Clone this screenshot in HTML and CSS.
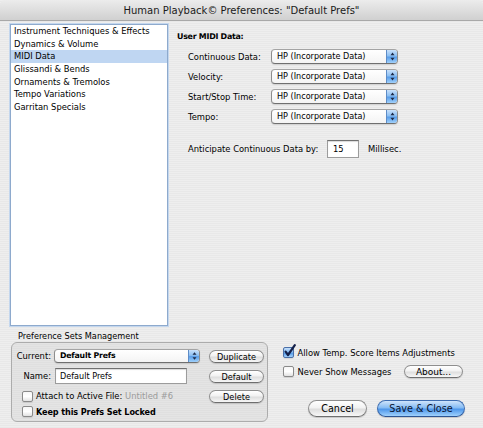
FILE: index.html
```html
<!DOCTYPE html>
<html>
<head>
<meta charset="utf-8">
<title>Human Playback Preferences</title>
<link rel="stylesheet" href="styles.css">
</head>
<body>
<div class="titlebar">Human Playback© Preferences: "Default Prefs"</div>
<div class="main">
  <ul class="list">
    <li>Instrument Techniques &amp; Effects</li>
    <li>Dynamics &amp; Volume</li>
    <li class="selected">MIDI Data</li>
    <li>Glissandi &amp; Bends</li>
    <li>Ornaments &amp; Tremolos</li>
    <li>Tempo Variations</li>
    <li>Garritan Specials</li>
  </ul>
  <div class="panel">
    <div class="heading">User MIDI Data:</div>
    <div class="midi-grid">
      <span class="label">Continuous Data:</span>
      <div class="popup"><span class="popup-text">HP (Incorporate Data)</span><span class="popup-arrows"><svg width="9" height="13" viewBox="0 0 9 13"><path d="M2.5 5.2 L4.5 2.6 L6.5 5.2 Z M2.5 7.8 L4.5 10.4 L6.5 7.8 Z" fill="#1d2a48"/></svg></span></div>
      <span class="label">Velocity:</span>
      <div class="popup"><span class="popup-text">HP (Incorporate Data)</span><span class="popup-arrows"><svg width="9" height="13" viewBox="0 0 9 13"><path d="M2.5 5.2 L4.5 2.6 L6.5 5.2 Z M2.5 7.8 L4.5 10.4 L6.5 7.8 Z" fill="#1d2a48"/></svg></span></div>
      <span class="label">Start/Stop Time:</span>
      <div class="popup"><span class="popup-text">HP (Incorporate Data)</span><span class="popup-arrows"><svg width="9" height="13" viewBox="0 0 9 13"><path d="M2.5 5.2 L4.5 2.6 L6.5 5.2 Z M2.5 7.8 L4.5 10.4 L6.5 7.8 Z" fill="#1d2a48"/></svg></span></div>
      <span class="label">Tempo:</span>
      <div class="popup"><span class="popup-text">HP (Incorporate Data)</span><span class="popup-arrows"><svg width="9" height="13" viewBox="0 0 9 13"><path d="M2.5 5.2 L4.5 2.6 L6.5 5.2 Z M2.5 7.8 L4.5 10.4 L6.5 7.8 Z" fill="#1d2a48"/></svg></span></div>
    </div>
    <div class="anticipate">
      <span class="ant-label">Anticipate Continuous Data by:</span>
      <span class="field small-field">15</span>
      <span class="unit">Millisec.</span>
    </div>
  </div>
</div>
<div class="bottom">
  <div class="sets">
    <div class="sets-title">Preference Sets Management</div>
    <div class="group">
      <div class="group-left">
        <div class="g-row">
          <span class="g-label">Current:</span>
          <div class="popup popup-current"><span class="popup-text bold-text">Default Prefs</span><span class="popup-arrows"><svg width="9" height="12" viewBox="0 0 9 12"><path d="M2.5 4.8 L4.5 2.3 L6.5 4.8 Z M2.5 7.2 L4.5 9.7 L6.5 7.2 Z" fill="#1d2a48"/></svg></span></div>
        </div>
        <div class="g-row g-row-name">
          <span class="g-label">Name:</span>
          <span class="field name-field">Default Prefs</span>
        </div>
        <div class="g-row g-row-check">
          <span class="checkbox"></span>
          <span>Attach to Active File: <span class="dim">Untitled #6</span></span>
        </div>
        <div class="g-row g-row-check2">
          <span class="checkbox"></span>
          <span class="bold-text lock-text">Keep this Prefs Set Locked</span>
        </div>
      </div>
      <div class="group-buttons">
        <span class="btn btn-small">Duplicate</span>
        <span class="btn btn-small">Default</span>
        <span class="btn btn-small">Delete</span>
      </div>
    </div>
  </div>
  <div class="side">
    <div class="s-row">
      <span class="checkbox checked"><svg width="13" height="14" viewBox="0 0 13 14"><path d="M2.6 7.6 L5 11 L11.8 1.2" fill="none" stroke="#14204a" stroke-width="2.2" stroke-linecap="round" stroke-linejoin="round"/></svg></span>
      <span>Allow Temp. Score Items Adjustments</span>
    </div>
    <div class="s-row s-row2">
      <span class="checkbox"></span>
      <span>Never Show Messages</span>
      <span class="btn btn-about">About...</span>
    </div>
    <div class="s-actions">
      <span class="btn btn-big">Cancel</span>
      <span class="btn btn-big btn-default">Save &amp; Close</span>
    </div>
  </div>
</div>
</body>
</html>
```
FILE: styles.css
```css
html, body {
  margin: 0;
  padding: 0;
}
body {
  width: 483px;
  height: 428px;
  overflow: hidden;
  font-family: "DejaVu Sans", "Noto Sans", sans-serif;
  font-size: 8.4px;
  color: #000;
  background: repeating-linear-gradient(to bottom, #eeeeee 0px, #eeeeee 1px, #e8e8e8 1px, #e8e8e8 2px);
}

.titlebar {
  height: 20px;
  border-bottom: 1px solid #a8a8a8;
  background: linear-gradient(to bottom, #ececec, #d0d0d0);
  display: flex;
  align-items: center;
  justify-content: center;
  font-size: 10px;
  color: #1a1a1a;
  border-radius: 5px 5px 0 0;
}

.main {
  display: flex;
  padding: 3px 0 0 10px;
  height: 302px;
}

.list {
  list-style: none;
  margin: 0;
  padding: 0;
  width: 156px;
  height: 300px;
  background: #fff;
  border: 1px solid #8eaacd;
  box-shadow: 0 0 0 1px #c4d7ee;
}
.list li {
  height: 12.7px;
  line-height: 12.7px;
  padding-left: 3px;
  white-space: nowrap;
}
.list li.selected {
  background: #bfd6f2;
}

.panel {
  margin-left: 9px;
  flex: 1;
}
.heading {
  margin-top: 5.5px;
  line-height: 13px;
  font-weight: bold;
  font-size: 7.9px;
  letter-spacing: -0.25px;
}

.midi-grid {
  display: grid;
  grid-template-columns: 83px 127px;
  row-gap: 5px;
  align-items: center;
  margin: 6.5px 0 0 11px;
}

.popup {
  height: 13px;
  border: 1px solid #8d8d8d;
  border-top-color: #a4a4a4;
  border-bottom-color: #6f6f6f;
  border-radius: 4px;
  background: linear-gradient(to bottom, #ffffff, #f4f4f4);
  display: flex;
  align-items: stretch;
  overflow: hidden;
  box-shadow: 0 1px 1px rgba(0,0,0,0.12);
}
.popup-text {
  flex: 1;
  padding-left: 5px;
  line-height: 13px;
  font-size: 8.1px;
  white-space: nowrap;
}
.popup-arrows {
  width: 10px;
  display: flex;
  align-items: center;
  justify-content: center;
  background: linear-gradient(to bottom, #c9e1fb 0%, #8dc0f3 45%, #5a9ee9 55%, #9fd0fb 100%);
  border-left: 1px solid #5e8cc6;
}

.anticipate {
  display: flex;
  align-items: center;
  margin: 16px 0 0 11px;
}
.ant-label {
  width: 139px;
}
.field {
  background: #fff;
  border: 1px solid #9c9c9c;
  border-top-color: #707070;
  box-shadow: inset 0 1px 1px rgba(0,0,0,0.15);
  box-sizing: border-box;
  white-space: nowrap;
}
.small-field {
  width: 32px;
  height: 18px;
  line-height: 16px;
  padding-left: 5px;
}
.unit {
  margin-left: 9px;
}

.bottom {
  display: flex;
}
.sets {
  width: 268px;
}
.sets-title {
  margin: 5px 0 0 18px;
  line-height: 10px;
  font-size: 8.2px;
}
.group {
  margin: 1px 0 0 11px;
  box-sizing: border-box;
  width: 257px;
  height: 80px;
  border: 1px solid #acacac;
  border-radius: 6px;
  background: repeating-linear-gradient(to bottom, #e4e4e4 0px, #e4e4e4 1px, #dfdfdf 1px, #dfdfdf 2px);
  display: flex;
  padding: 6px 0 0 4px;
}
.group-left {
  width: 185px;
}
.g-row {
  display: flex;
  align-items: center;
}
.g-label {
  width: 35px;
  text-align: right;
  margin-right: 3px;
}
.popup-current {
  width: 144px;
  height: 12px;
}
.popup-current .popup-text {
  line-height: 12px;
}
.g-row-name {
  margin-top: 4.5px;
}
.g-row-name .g-label {
  margin-right: 4px;
}
.name-field {
  width: 132px;
  height: 16px;
  line-height: 14px;
  padding-left: 4px;
  font-size: 8.1px;
}
.g-row-check {
  margin-top: 6px;
  height: 13px;
  padding-left: 6px;
}
.g-row-check2 {
  margin-top: 2.5px;
  height: 13px;
  padding-left: 6px;
}
.dim {
  color: #9b9b9b;
}
.bold-text {
  font-weight: bold;
}
.lock-text {
  font-size: 8.1px;
  letter-spacing: -0.1px;
}
.popup-current .bold-text {
  font-size: 7.8px;
  letter-spacing: -0.2px;
}

.checkbox {
  width: 11px;
  height: 11px;
  box-sizing: border-box;
  border: 1px solid #8a8a8a;
  border-radius: 2px;
  background: linear-gradient(to bottom, #f6f6f6, #ffffff 50%, #e2e2e2);
  margin-right: 3px;
  position: relative;
  flex: none;
  box-shadow: 0 1px 1px rgba(0,0,0,0.1);
}
.checkbox.checked {
  border-color: #4a6fa8;
  background: linear-gradient(to bottom, #c6dffa 0%, #7db6f0 50%, #4f98e8 55%, #a7d3fb 100%);
}
.checkbox svg {
  position: absolute;
  left: -1px;
  top: -4px;
}

.group-buttons {
  display: flex;
  flex-direction: column;
  margin-left: 8px;
  padding-top: 1px;
  gap: 7px;
}
.btn {
  display: flex;
  align-items: center;
  justify-content: center;
  box-sizing: border-box;
  border: 1px solid #8e8e8e;
  border-bottom-color: #6e6e6e;
  border-radius: 8px;
  background: linear-gradient(to bottom, #ffffff 0%, #f2f2f2 45%, #dedede 55%, #f7f7f7 100%);
  box-shadow: 0 1px 1px rgba(0,0,0,0.15);
  white-space: nowrap;
}
.btn-small {
  width: 55px;
  height: 13px;
  font-size: 8.2px;
}

.side {
  flex: 1;
  padding: 20px 0 0 15px;
}
.s-row {
  display: flex;
  align-items: center;
  height: 13px;
}
.s-row .checkbox {
  margin-right: 3.5px;
}
.s-row2 {
  margin-top: 5.5px;
  height: 14px;
  padding-right: 20px;
}
.btn-about {
  margin-left: auto;
  width: 59px;
  height: 13.5px;
  font-size: 9px;
}
.s-actions {
  display: flex;
  justify-content: flex-end;
  gap: 10px;
  margin-top: 21px;
  padding-right: 18px;
}
.btn-big {
  height: 17px;
  border-radius: 9px;
  font-size: 9.6px;
  width: 59px;
}
.btn-default {
  width: 88px;
  border-color: #3d6cb0;
  border-bottom-color: #2c5493;
  color: #0a1430;
  background: linear-gradient(to bottom, #cfe4fb 0%, #86bcf4 45%, #4f97ea 55%, #9fd1fd 100%);
}
```
